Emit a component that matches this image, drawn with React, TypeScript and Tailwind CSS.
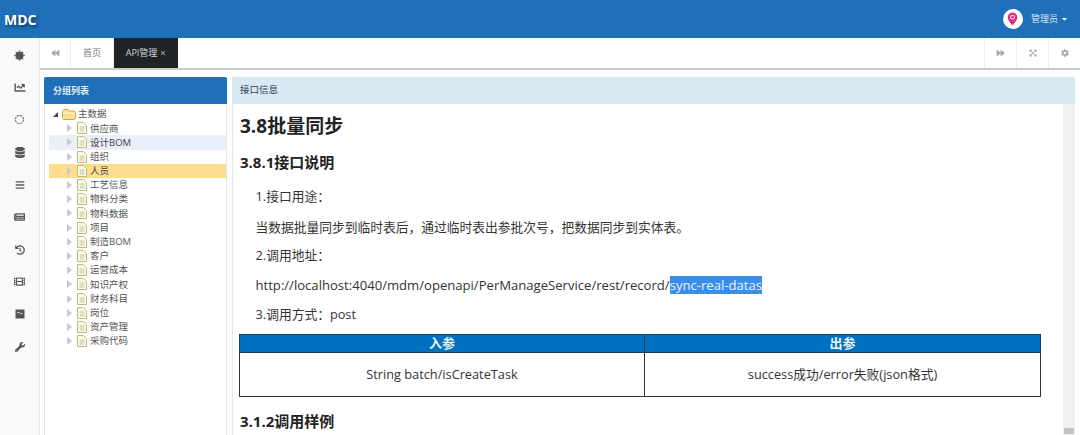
import {
  FaBackward,
  FaBars,
  FaCaretDown,
  FaChartLine,
  FaCog,
  FaDatabase,
  FaExpandArrowsAlt,
  FaFilm,
  FaForward,
  FaHistory,
  FaNewspaper,
  FaTimes,
  FaWrench,
} from "react-icons/fa"
import type { ReactNode } from "react"

const sideIcons: ReactNode[] = [
  <svg key="dot" viewBox="0 0 16 16" className="h-[11px] w-[11px]" fill="currentColor">
    <circle cx="8" cy="8" r="6" />
    <circle cx="8" cy="1.200" r="1" />
    <circle cx="8" cy="14.800" r="1" />
    <circle cx="1.200" cy="8" r="1" />
    <circle cx="14.800" cy="8" r="1" />
    <circle cx="3.200" cy="3.200" r="1" />
    <circle cx="12.800" cy="3.200" r="1" />
    <circle cx="3.200" cy="12.800" r="1" />
    <circle cx="12.800" cy="12.800" r="1" />
  </svg>,
  <FaChartLine key="chart" className="h-[11px] w-[12px]" />,
  <svg key="spin" viewBox="0 0 12 12" className="h-[11px] w-[11px] text-[#777]" fill="none">
    <circle cx="6" cy="6" r="4.500" stroke="currentColor" strokeWidth="1.200" strokeDasharray="2.600 .9" />
  </svg>,
  <FaDatabase key="db" className="h-[11px] w-[10px]" />,
  <FaBars key="bars" className="h-[10px] w-[10px]" />,
  <FaNewspaper key="news" className="h-[10px] w-[11px]" />,
  <FaHistory key="history" className="h-[10px] w-[10px]" />,
  <FaFilm key="film" className="h-[11px] w-[11px]" />,
  <svg key="box" viewBox="0 0 10 10" className="h-[10px] w-[10px]">
    <path d="M.5.500h9v9h-9z" fill="currentColor" />
    <path d="M2 3.500h2.500l.5 1h2.500" stroke="#ddd" strokeWidth=".8" fill="none" />
  </svg>,
  <FaWrench key="wrench" className="h-[10px] w-[10px]" />,
]

const treeItems = [
  "供应商",
  "设计BOM",
  "组织",
  "人员",
  "工艺信息",
  "物料分类",
  "物料数据",
  "项目",
  "制造BOM",
  "客户",
  "运营成本",
  "知识产权",
  "财务科目",
  "岗位",
  "资产管理",
  "采购代码",
]

function FileIcon() {
  return (
    <svg viewBox="0 0 10 12" className="h-[12px] w-[10px] shrink-0">
      <path d="M.5.500h6l3 3v8h-9z" fill="#fbfbe6" stroke="#b9bd7c" />
      <path d="M2.500 5h5M2.500 7h5M2.500 9h5" stroke="#b5b98a" strokeWidth=".8" />
    </svg>
  )
}

function FolderIcon() {
  return (
    <svg viewBox="0 0 14 11" className="h-[11px] w-[14px] shrink-0">
      <path d="M.5 2.500 2 .5h4l1 1.500h5.500l1 1v6.500l-1 1h-11l-1-1z" fill="#fbe08a" stroke="#c8a94f" />
      <path d="M1 4h12" stroke="#fff6cf" />
    </svg>
  )
}

function TreeRow({ label }: { label: string }) {
  const selected = label === "人员"
  const hovered = label === "设计BOM"

  return (
    <div
      className={
        selected
          ? "flex h-[14.2px] items-center bg-[#fdde8f] pl-[18px] text-[#444]"
          : hovered
            ? "flex h-[14.2px] items-center bg-[#e9f0fa] pl-[18px] text-[#444]"
            : "flex h-[14.2px] items-center pl-[18px] text-[#555]"
      }
    >
      <span className="mr-[5px] h-0 w-0 border-y-[4px] border-l-[5px] border-y-transparent border-l-[#c9c9d2]" />
      <FileIcon />
      <span className="ml-[3px] leading-none">{label}</span>
    </div>
  )
}

function TabButton({ children, wide }: { children: ReactNode; wide?: boolean }) {
  return (
    <div
      className={
        wide
          ? "flex h-full w-[32px] items-center justify-center border-l border-[#eee] text-[#aaa]"
          : "flex h-full w-[31px] items-center justify-center border-r border-[#eee] text-[#aaa]"
      }
    >
      {children}
    </div>
  )
}

export default function App() {
  return (
    <div className="flex h-[435px] w-[1080px] flex-col overflow-hidden bg-white font-['Open_Sans','Noto_Sans_CJK_SC',sans-serif]">
      <header className="flex h-[38px] shrink-0 items-center justify-between bg-[#1f6fb9] shadow-[0_1px_2px_rgba(0,0,0,0.25)]">
        <span className="pl-[4px] text-[14px] font-bold text-white [text-shadow:2px_2px_3px_rgba(0,0,0,0.5)]">
          MDC
        </span>
        <div className="flex items-center pr-[12px]">
          <span className="flex h-[20px] w-[20px] items-center justify-center rounded-full bg-white">
            <svg viewBox="0 0 12 15" className="h-[14px] w-[11px]">
              <path d="M6 14.500C3 10.500.8 8.500.8 5.600a5.200 5.200 0 0 1 10.400 0c0 2.900-2.200 4.900-5.200 8.900z" fill="#e8287c" />
              <circle cx="6" cy="5.500" r="2.600" fill="#fff" />
              <circle cx="6" cy="5.500" r="1.500" fill="#e8287c" />
            </svg>
          </span>
          <span className="ml-[8px] text-[9px] text-[#dbe9f6]">管理员</span>
          <FaCaretDown className="ml-[3px] h-[8px] w-[7px] text-white" />
        </div>
      </header>

      <div className="flex min-h-0 flex-1">
        <aside className="flex w-[40px] shrink-0 flex-col items-center border-r border-[#e6e6e6] bg-[#f9f9f9] pt-[1px] text-[#555]">
          {sideIcons.map((icon, index) => (
            <div key={index} className="flex h-[32.4px] w-full items-center justify-center">
              {icon}
            </div>
          ))}
        </aside>

        <main className="flex min-w-0 flex-1 flex-col">
          <div className="flex h-[32px] shrink-0 items-stretch justify-between border-b-2 border-[#c3d0cc] bg-white">
            <div className="flex items-center">
              <TabButton>
                <FaBackward className="h-[8px] w-[9px]" />
              </TabButton>
              <div className="flex h-full w-[43px] items-center justify-center border-r border-[#eee] text-[9px] text-[#777]">
                首页
              </div>
              <div className="flex h-full w-[64px] items-center justify-center gap-[3px] bg-[#1f2326] text-[9px] text-[#cfd3d6]">
                API管理
                <FaTimes className="h-[6px] w-[6px] text-[#8c9196]" />
              </div>
            </div>
            <div className="flex items-center">
              <TabButton wide>
                <FaForward className="h-[8px] w-[9px]" />
              </TabButton>
              <TabButton wide>
                <FaExpandArrowsAlt className="h-[8px] w-[8px]" />
              </TabButton>
              <TabButton wide>
                <FaCog className="h-[8px] w-[8px]" />
              </TabButton>
            </div>
          </div>

          <div className="flex min-h-0 flex-1 gap-[5px] pl-[4px] pr-[5px] pt-[7px]">
            <section className="flex w-[183px] shrink-0 flex-col border-x border-[#e4e4e4]">
              <div className="-mx-[1px] flex h-[27px] shrink-0 items-center rounded-t-[2px] bg-[#1f6fb9] pl-[9px] text-[9px] font-bold text-[#e4eef8]">
                分组列表
              </div>
              <div className="pl-[4px] pt-[3px] text-[9.500px]">
                <div className="flex h-[14.2px] items-center pl-[4px] text-[#555]">
                  <span className="mr-[4px] h-0 w-0 border-b-[5px] border-l-[5px] border-b-[#444] border-l-transparent" />
                  <FolderIcon />
                  <span className="ml-[2px] leading-none">主数据</span>
                </div>
                {treeItems.map((item) => (
                  <TreeRow key={item} label={item} />
                ))}
              </div>
            </section>

            <section className="flex min-w-0 flex-1 flex-col">
              <div className="flex h-[27px] shrink-0 items-center bg-[#d9e9f3] pl-[8px] text-[9.500px] text-[#1f3f5f]">
                接口信息
              </div>
              <div className="flex min-h-0 flex-1 border-l border-[#e8e8e8]">
                <article className="min-w-0 flex-1 pl-[7px] pr-[21px] text-[#333]">
                  <h1 className="mt-[9px] text-[19px] leading-[27px] font-bold text-[#222]">3.8批量同步</h1>
                  <h2 className="mt-[12px] text-[15px] leading-[21px] font-bold text-[#222]">3.8.1接口说明</h2>
                  <div className="pl-[15.500px] text-[12.750px] leading-[19px]">
                    <p className="mt-[14px]">1.接口用途：</p>
                    <p className="mt-[12px]">当数据批量同步到临时表后，通过临时表出参批次号，把数据同步到实体表。</p>
                    <p className="mt-[9px]">2.调用地址：</p>
                    <p className="mt-[11px] text-[13.100px]">
                      http://localhost:4040/mdm/openapi/PerManageService/rest/record/
                      <span className="bg-[#3a8ee6] text-[#e8f2fb]">sync-real-datas</span>
                    </p>
                    <p className="mt-[10px]">3.调用方式：post</p>
                  </div>
                  <table className="-ml-[1px] mt-[10px] w-[802px] table-fixed border-collapse border border-[#222] text-center text-[12.750px]">
                    <thead>
                      <tr className="h-[18px] bg-[#0070c0] text-[13px] font-bold text-[#e8f4fb]">
                        <th className="w-[405px] border border-[#1c3f5c] leading-none">入参</th>
                        <th className="border border-[#1c3f5c] leading-none">出参</th>
                      </tr>
                    </thead>
                    <tbody>
                      <tr className="h-[44px]">
                        <td className="border border-[#333]">String batch/isCreateTask</td>
                        <td className="border border-[#333]">success成功/error失败(json格式)</td>
                      </tr>
                    </tbody>
                  </table>
                  <h2 className="mt-[14px] text-[15px] leading-[21px] font-bold text-[#222]">3.1.2调用样例</h2>
                </article>
                <div className="flex w-[12px] shrink-0 flex-col justify-end bg-[#f1f1f1]">
                  <div className="mx-auto mb-[1px] h-[6px] w-[10px] bg-[#c4c4c4]" />
                </div>
              </div>
            </section>
          </div>
        </main>
      </div>
    </div>
  )
}
